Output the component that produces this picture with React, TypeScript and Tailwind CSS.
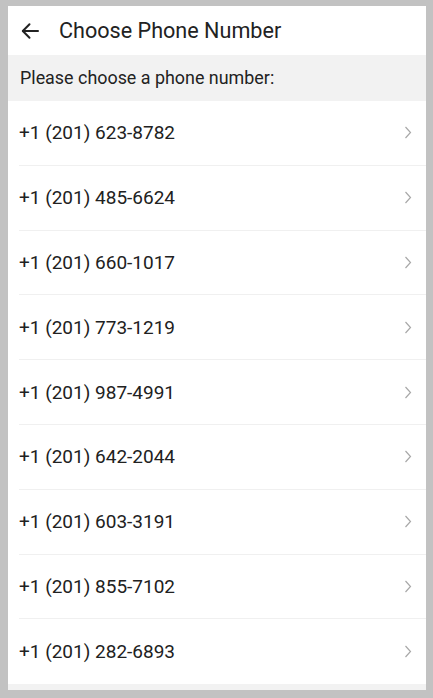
import React from "react";

const numbers = [
  "+1 (201) 623-8782",
  "+1 (201) 485-6624",
  "+1 (201) 660-1017",
  "+1 (201) 773-1219",
  "+1 (201) 987-4991",
  "+1 (201) 642-2044",
  "+1 (201) 603-3191",
  "+1 (201) 855-7102",
  "+1 (201) 282-6893",
];

export default function App() {
  return (
    <div
      className="w-[433px] h-[698px] bg-[#c2c2c2] pt-[6px] pl-[8px] pr-[7px] pb-[8px] text-[#212121]"
      style={{ fontFamily: "Roboto, 'Noto Sans', sans-serif" }}
    >
      <div className="w-full h-full bg-[#f2f2f2] flex flex-col">
        <div className="h-[49px] bg-white flex items-center pl-[13px]">
          <svg width="18" height="18" viewBox="0 0 18 18" fill="none" stroke="#222" strokeWidth="2" strokeLinecap="round" strokeLinejoin="round">
            <path d="M17 9H2" />
            <path d="M8.5 2.2L1.8 9l6.7 6.8" />
          </svg>
          <span className="ml-[20px] text-[21.6px] leading-none text-[#222]">Choose Phone Number</span>
        </div>
        <div className="h-[46px] flex items-center pl-[12px] text-[17.9px] text-[#222]">
          Please choose a phone number:
        </div>
        <div className="bg-white flex flex-col">
          {numbers.map((n, i) => (
            <div key={n} className="pl-[11px]">
              <div
                className={
                  "h-[64.8px] flex items-center justify-between pr-[14px] " +
                  (i < numbers.length - 1 ? "border-b border-[#f0f0f0]" : "")
                }
              >
                <span className="text-[19px] leading-none">{n}</span>
                <svg width="8" height="13" viewBox="0 0 8 13" fill="none" stroke="#a8a8a8" strokeWidth="1.2">
                  <path d="M1.5 1l5 5.5-5 5.5" />
                </svg>
              </div>
            </div>
          ))}
        </div>
      </div>
    </div>
  );
}
